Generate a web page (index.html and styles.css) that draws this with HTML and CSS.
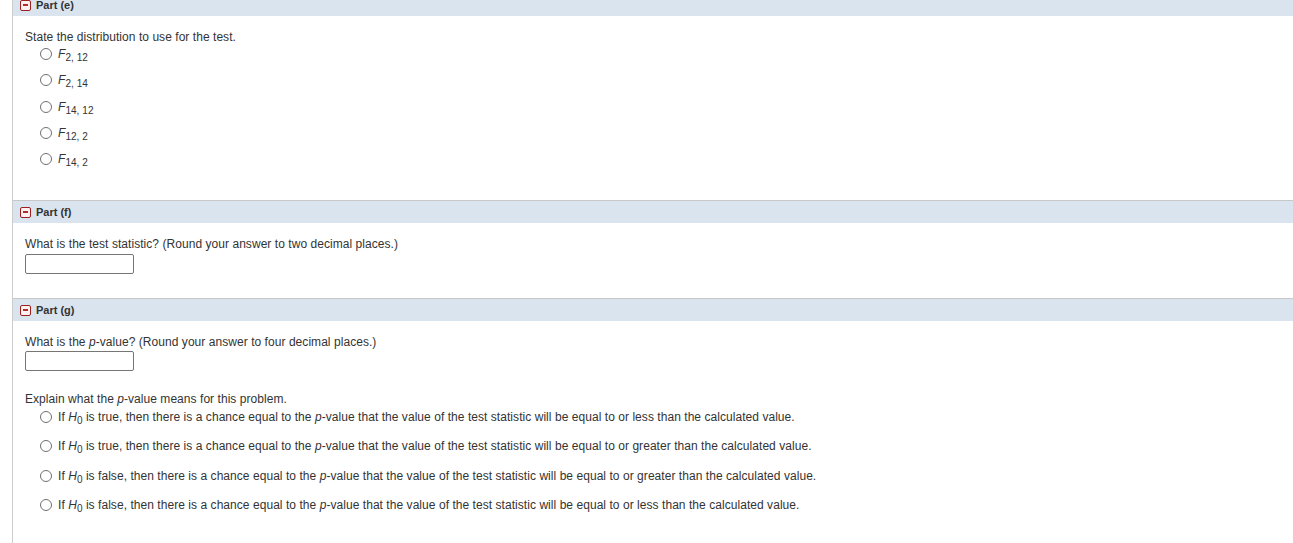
FILE: index.html
```html
<!DOCTYPE html>
<html>
<head>
<meta charset="utf-8">
<link rel="stylesheet" href="styles.css">
</head>
<body>
<div class="page">
  <section class="part first">
    <div class="part-head"><span class="toggle"></span><span class="part-title">Part (e)</span></div>
    <div class="part-body body-e">
      <p class="q">State the distribution to use for the test.</p>
      <ul class="options">
        <li><span class="radio"></span><span><i>F</i><sub>2, 12</sub></span></li>
        <li><span class="radio"></span><span><i>F</i><sub>2, 14</sub></span></li>
        <li><span class="radio"></span><span><i>F</i><sub>14, 12</sub></span></li>
        <li><span class="radio"></span><span><i>F</i><sub>12, 2</sub></span></li>
        <li><span class="radio"></span><span><i>F</i><sub>14, 2</sub></span></li>
      </ul>
    </div>
  </section>
  <section class="part">
    <div class="part-head"><span class="toggle"></span><span class="part-title">Part (f)</span></div>
    <div class="part-body body-f">
      <p class="q">What is the test statistic? (Round your answer to two decimal places.)</p>
      <input class="answer" type="text">
    </div>
  </section>
  <section class="part">
    <div class="part-head"><span class="toggle"></span><span class="part-title">Part (g)</span></div>
    <div class="part-body body-g">
      <p class="q">What is the <i>p</i>-value? (Round your answer to four decimal places.)</p>
      <input class="answer tight" type="text">
      <p class="q explain">Explain what the <i>p</i>-value means for this problem.</p>
      <ul class="options wide">
        <li><span class="radio"></span><span>If <i>H</i><sub>0</sub> is true, then there is a chance equal to the <i>p</i>-value that the value of the test statistic will be equal to or less than the calculated value.</span></li>
        <li><span class="radio"></span><span>If <i>H</i><sub>0</sub> is true, then there is a chance equal to the <i>p</i>-value that the value of the test statistic will be equal to or greater than the calculated value.</span></li>
        <li><span class="radio"></span><span>If <i>H</i><sub>0</sub> is false, then there is a chance equal to the <i>p</i>-value that the value of the test statistic will be equal to or greater than the calculated value.</span></li>
        <li><span class="radio"></span><span>If <i>H</i><sub>0</sub> is false, then there is a chance equal to the <i>p</i>-value that the value of the test statistic will be equal to or less than the calculated value.</span></li>
      </ul>
    </div>
  </section>
</div>
</body>
</html>
```

FILE: styles.css
```css
html, body {
  margin: 0;
  padding: 0;
  background: #ffffff;
}
body {
  font-family: "Liberation Sans", Arial, sans-serif;
  font-size: 12px;
  letter-spacing: 0.05px;
  color: #333333;
  overflow: hidden;
}
.page {
  margin-left: 12px;
  border-left: 1px solid #cccccc;
  min-height: 560px;
}
.part {
  border-top: 1px solid #c8c8c8;
}
.part.first {
  border-top: none;
  margin-top: -6px;
}
.part-head {
  height: 22px;
  background: #d9e4ee;
  display: flex;
  align-items: center;
  padding-left: 7px;
  font-size: 11px;
  font-weight: bold;
  letter-spacing: 0;
  color: #333333;
}
.toggle {
  width: 9px;
  height: 9px;
  border: 1px solid #9e1f1f;
  border-radius: 2px;
  background: #fdf1f1;
  margin-right: 5px;
  display: flex;
  align-items: center;
  justify-content: center;
}
.toggle::after {
  content: "";
  width: 5px;
  height: 2px;
  background: #b52a2a;
}
.part-body {
  padding: 14px 12px 0 12px;
}
.body-e { padding-bottom: 31px; }
.body-f { padding-top: 14px; padding-bottom: 24px; }
.body-g { padding-top: 14px; padding-bottom: 30px; }
.q {
  margin: 0;
  line-height: 14px;
}
.explain {
  margin-top: 21px;
}
.options {
  list-style: none;
  margin: 0;
  padding: 0 0 0 15px;
  display: flex;
  flex-direction: column;
  gap: 6.3px;
}
.options.wide {
  margin-top: 1px;
  gap: 9.3px;
}
.options li {
  height: 20px;
  line-height: 14px;
  display: flex;
  align-items: center;
}
.radio {
  width: 10px;
  height: 10px;
  border: 1px solid #707070;
  border-radius: 50%;
  margin-right: 6px;
  flex: none;
  background: #fff;
}
.options i {
  font-style: italic;
}
sub {
  font-size: 10px;
  vertical-align: baseline;
  position: relative;
  top: 3px;
  line-height: 0;
}
.answer {
  display: block;
  margin: 3px 0 0 0;
  width: 109px;
  height: 20px;
  box-sizing: border-box;
  border: 1px solid #767676;
  border-radius: 2px;
  padding: 0 3px;
  font-family: "Liberation Sans", Arial, sans-serif;
  font-size: 12px;
  background: #fff;
}
.answer.tight {
  margin-top: 2px;
}
```
